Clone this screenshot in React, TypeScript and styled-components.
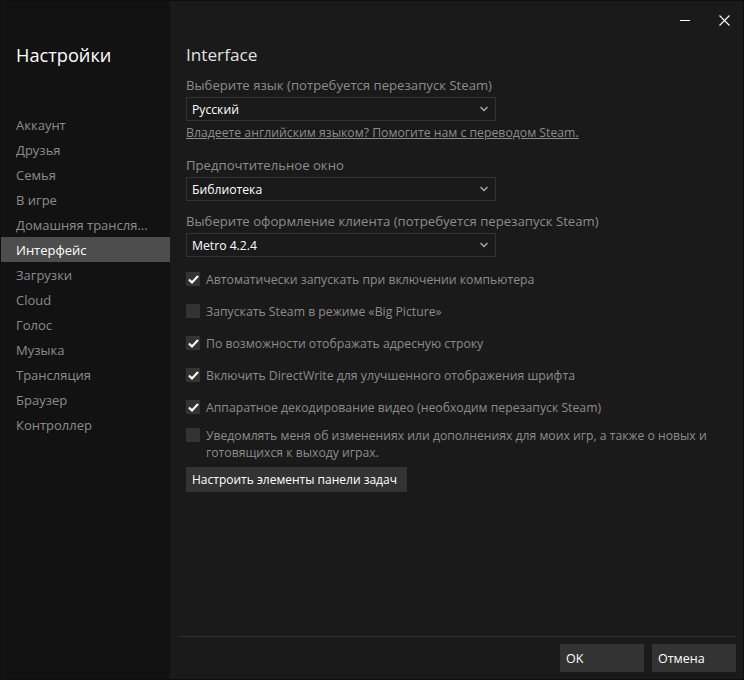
import React from 'react';
import styled, { createGlobalStyle } from 'styled-components';

const GlobalStyle = createGlobalStyle`
  html, body {
    margin: 0;
    padding: 0;
    background: #1a1a1a;
  }
  * {
    box-sizing: border-box;
  }
`;

const NAV_ITEMS = [
  'Аккаунт',
  'Друзья',
  'Семья',
  'В игре',
  'Домашняя трансляция',
  'Интерфейс',
  'Загрузки',
  'Cloud',
  'Голос',
  'Музыка',
  'Трансляция',
  'Браузер',
  'Контроллер',
];

const Chevron = () => (
  <svg width="8" height="6" viewBox="0 0 8 6" fill="none">
    <path d="M0.5 1 L4 4.5 L7.5 1" stroke="#a8a8a8" strokeWidth="1.5" />
  </svg>
);

const Tick = () => (
  <svg width="11" height="9" viewBox="0 0 11 9" fill="none">
    <path d="M1 4.5 L4 7.5 L10 1" stroke="#ffffff" strokeWidth="2.1" />
  </svg>
);

const App = () => {
  return (
    <Window>
      <GlobalStyle />
      <Sidebar>
        <SideTitle>Настройки</SideTitle>
        <Nav>
          {NAV_ITEMS.map((item) => (
            <NavItem key={item} $active={item === 'Интерфейс'}>
              <NavLabel>{item}</NavLabel>
            </NavItem>
          ))}
        </Nav>
      </Sidebar>
      <Main>
        <TitleBar>
          <WindowButton aria-label="minimize">
            <svg width="10" height="11" viewBox="0 0 10 11">
              <path d="M0 5.5 H10" stroke="#ffffff" strokeWidth="1" />
            </svg>
          </WindowButton>
          <WindowButton aria-label="close">
            <svg width="11" height="11" viewBox="0 0 11 11">
              <path d="M0.5 0.5 L10.5 10.5 M10.5 0.5 L0.5 10.5" stroke="#ffffff" strokeWidth="1.1" />
            </svg>
          </WindowButton>
        </TitleBar>
        <Content>
          <PageTitle>Interface</PageTitle>
          <Label>Выберите язык (потребуется перезапуск Steam)</Label>
          <Select>
            Русский
            <Chevron />
          </Select>
          <HelpLink href="#">Владеете английским языком? Помогите нам с переводом Steam.</HelpLink>
          <Label $top={13}>Предпочтительное окно</Label>
          <Select>
            Библиотека
            <Chevron />
          </Select>
          <Label $top={10}>Выберите оформление клиента (потребуется перезапуск Steam)</Label>
          <Select>
            Metro 4.2.4
            <Chevron />
          </Select>
          <Options>
            <Option>
              <CheckBox><Tick /></CheckBox>
              Автоматически запускать при включении компьютера
            </Option>
            <Option>
              <CheckBox />
              Запускать Steam в режиме «Big Picture»
            </Option>
            <Option>
              <CheckBox><Tick /></CheckBox>
              По возможности отображать адресную строку
            </Option>
            <Option>
              <CheckBox><Tick /></CheckBox>
              Включить DirectWrite для улучшенного отображения шрифта
            </Option>
            <Option>
              <CheckBox><Tick /></CheckBox>
              Аппаратное декодирование видео (необходим перезапуск Steam)
            </Option>
            <WrappedOption>
              <WrappedCheckBox />
              <span>
                Уведомлять меня об изменениях или дополнениях для моих игр, а также о новых и
                готовящихся к выходу играх.
              </span>
            </WrappedOption>
          </Options>
          <TaskbarButton>Настроить элементы панели задач</TaskbarButton>
        </Content>
        <Footer>
          <FooterButton>OK</FooterButton>
          <FooterButton>Отмена</FooterButton>
        </Footer>
      </Main>
    </Window>
  );
};

const Window = styled.div`
  display: flex;
  width: 744px;
  height: 680px;
  border: 1px solid #0e0e0e;
  background: #1a1a1a;
  font-family: 'Open Sans', 'Noto Sans', sans-serif;
  font-size: 12px;
  color: #8c8c8c;
  overflow: hidden;
`;

const Sidebar = styled.aside`
  flex: 0 0 169px;
  display: flex;
  flex-direction: column;
  background: #121212;
`;

const SideTitle = styled.div`
  margin: 40px 0 0 15px;
  height: 28px;
  font-size: 18.2px;
  line-height: 28px;
  color: #ffffff;
`;

const Nav = styled.nav`
  display: flex;
  flex-direction: column;
  margin-top: 43px;
`;

const NavItem = styled.div<{ $active?: boolean }>`
  height: 25px;
  padding: 0 15px;
  display: flex;
  align-items: center;
  font-size: 13px;
  color: ${({ $active }) => ($active ? '#ffffff' : '#8c8c8c')};
  background: ${({ $active }) => ($active ? '#4d4d4d' : 'transparent')};
`;

const NavLabel = styled.span`
  display: block;
  width: 132px;
  white-space: nowrap;
  overflow: hidden;
  text-overflow: ellipsis;
`;

const Main = styled.main`
  flex: 1;
  min-width: 0;
  display: flex;
  flex-direction: column;
`;

const TitleBar = styled.div`
  height: 40px;
  display: flex;
  justify-content: flex-end;
  align-items: center;
  gap: 29px;
  padding: 0 13px 2px 0;
`;

const WindowButton = styled.div`
  display: flex;
  width: 11px;
  height: 11px;
  align-items: center;
  justify-content: center;
`;

const Content = styled.div`
  flex: 1;
  display: flex;
  flex-direction: column;
  align-items: flex-start;
  padding-left: 16px;
`;

const PageTitle = styled.h1`
  margin: 0;
  height: 28px;
  font-size: 17.2px;
  font-weight: 400;
  line-height: 28px;
  color: #e0e0e0;
`;

const Label = styled.div<{ $top?: number }>`
  margin-top: ${({ $top }) => $top ?? 6}px;
  height: 20px;
  line-height: 20px;
  font-size: 13.15px;
  white-space: nowrap;
`;

const Select = styled.div`
  width: 310px;
  height: 24px;
  margin-top: 2px;
  padding: 0 7px 0 5px;
  display: flex;
  align-items: center;
  justify-content: space-between;
  border: 1px solid #333333;
  font-size: 12.2px;
  font-weight: 500;
  color: #ffffff;
`;

const HelpLink = styled.a`
  margin-top: 2px;
  height: 19px;
  line-height: 19px;
  font-size: 12.25px;
  color: #8c8c8c;
  white-space: nowrap;
`;

const Options = styled.div`
  display: flex;
  flex-direction: column;
  margin-top: 15px;
`;

const Option = styled.label`
  display: flex;
  align-items: center;
  gap: 6px;
  height: 14px;
  margin-bottom: 18px;
  font-size: 12.25px;
  white-space: nowrap;
`;

const WrappedOption = styled.label`
  display: flex;
  align-items: flex-start;
  gap: 6px;
  width: 535px;
  margin-top: -5px;
  font-size: 12.2px;
  line-height: 17px;
`;

const CheckBox = styled.span`
  flex: 0 0 14px;
  width: 14px;
  height: 14px;
  display: flex;
  align-items: center;
  justify-content: center;
  background: #333333;
`;

const WrappedCheckBox = styled(CheckBox)`
  margin-top: 1px;
`;

const TaskbarButton = styled.div`
  margin-top: 6px;
  width: 221px;
  height: 25px;
  padding-left: 6px;
  display: flex;
  align-items: center;
  background: #333333;
  font-size: 12px;
  color: #ffffff;
  white-space: nowrap;
`;

const Footer = styled.div`
  display: flex;
  justify-content: flex-end;
  gap: 8px;
  margin: 0 7px 7px 8px;
  padding-top: 7px;
  border-top: 1px solid #2d2d2d;
`;

const FooterButton = styled.div`
  width: 84px;
  height: 28px;
  padding-left: 6px;
  display: flex;
  align-items: center;
  background: #333333;
  font-size: 12.5px;
  color: #ffffff;
`;

export default App;
